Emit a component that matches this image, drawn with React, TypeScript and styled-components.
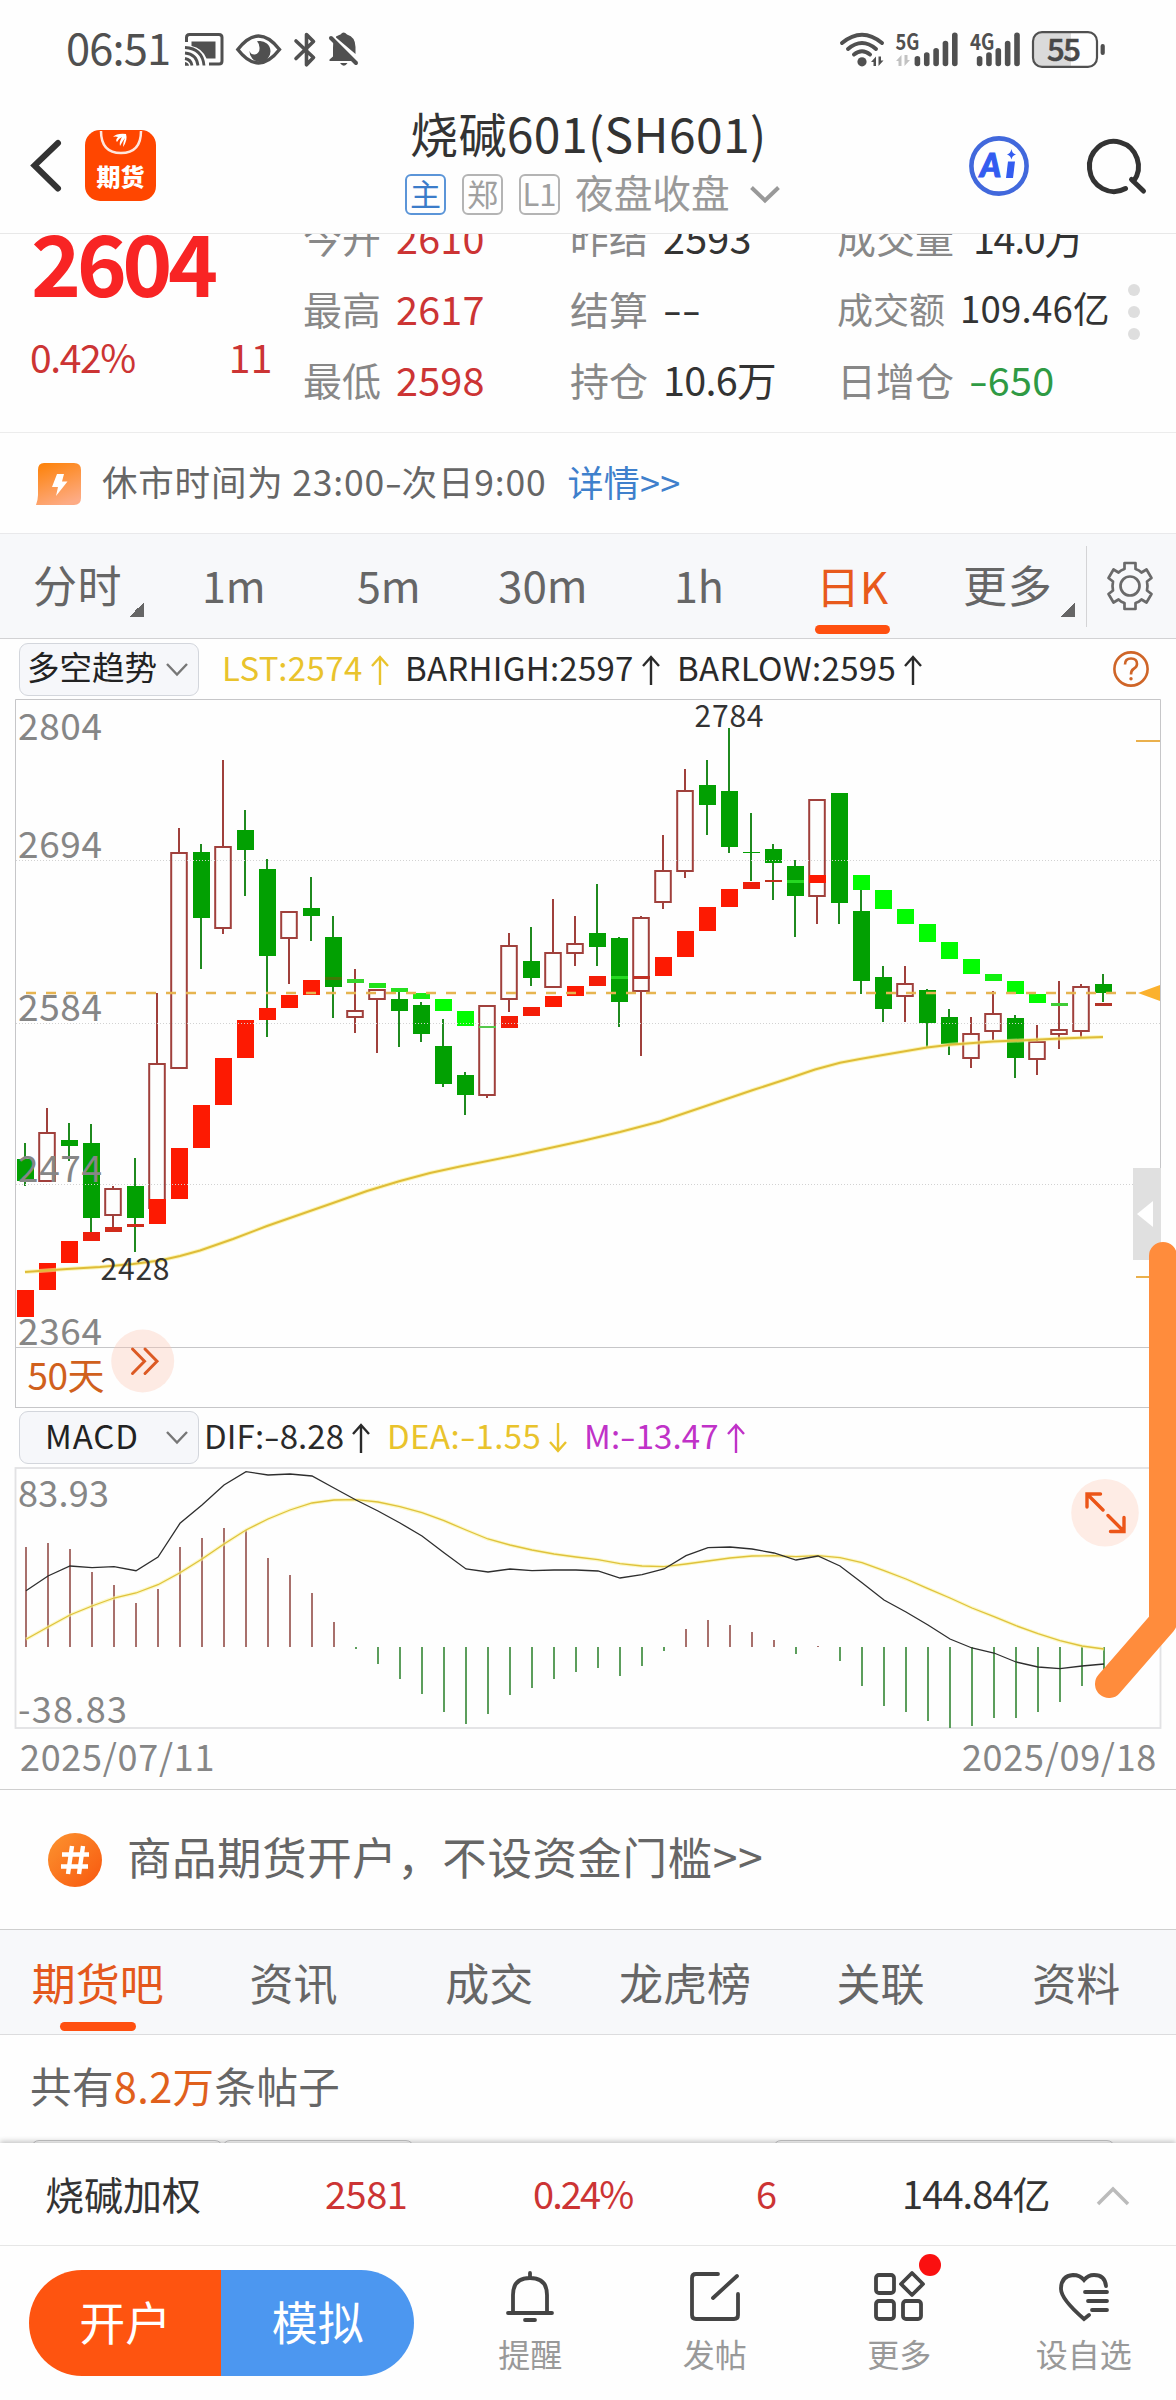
import React from "react";
import styled, { createGlobalStyle, css } from "styled-components";

const Global = createGlobalStyle`
  * { box-sizing: border-box; }
  html, body { margin: 0; padding: 0; background: #fefefe; }
  body { font-family: "Noto Sans CJK SC", "Noto Sans", sans-serif; color: #333; }
  svg { display: block; flex: none; overflow: visible; }
  svg text { font-family: "Noto Sans CJK SC", "Noto Sans", sans-serif; }
`;

const Page = styled.div`
  position: relative;
  width: 1176px;
  height: 2400px;
  overflow: hidden;
  display: flex;
  flex-direction: column;
  background: #fefefe;
`;

const Text = styled.span<{ $size: number; $color?: string; $ls?: number; $bold?: boolean }>`
  font-size: ${(p) => p.$size}px;
  line-height: 1;
  margin-top: -0.14em;
  white-space: nowrap;
  color: ${(p) => p.$color ?? "#333"};
  letter-spacing: ${(p) => p.$ls ?? 0}px;
  font-weight: ${(p) => (p.$bold ? 700 : 400)};
`;

/* Hyphens are drawn wide, close to the width of a digit. */
const WideDash = styled.span`
  display: inline-block;
  width: 0.47em;
  text-align: center;
  letter-spacing: 0;
  transform: scaleX(1.4);
`;
const dashed = (value: string) =>
  value.split(/(-)/).map((part, i) => (part === "-" ? <WideDash key={i}>-</WideDash> : part));

/* ---------- status bar ---------- */

const StatusBar = styled.div`
  flex: none;
  height: 100px;
  display: flex;
  align-items: center;
  padding: 0 71px 0 66px;
`;
const StatusIcons = styled.div`
  display: flex;
  margin-left: 14px;
`;
const StatusRight = styled.div`
  display: flex;
  margin-left: auto;
`;

/* ---------- header ---------- */

const Header = styled.header`
  flex: none;
  height: 134px;
  display: grid;
  grid-template-columns: 403px 1fr 232px;
  border-bottom: 1px solid #e8e8e8;
`;
const HeaderLeft = styled.div`
  display: flex;
  align-items: flex-start;
  padding: 30px 0 0 28px;
  gap: 21px;
`;
const AppIcon = styled.div`
  width: 71px;
  height: 71px;
  border-radius: 15px;
  background: #ff4600;
  display: flex;
  flex-direction: column;
  align-items: center;
`;
const AppName = styled.span`
  color: #fff;
  font-size: 24px;
  line-height: 24px;
  font-weight: 900;
  margin-top: 8px;
`;
const TitleBlock = styled.div`
  display: flex;
  flex-direction: column;
`;
const TitleRow = styled.div`
  height: 71px;
  display: flex;
  align-items: center;
  padding-left: 7px;
`;
const SubRow = styled.div`
  height: 47px;
  display: flex;
  align-items: center;
  padding-left: 2px;
`;
const Tag = styled.span<{ $active?: boolean }>`
  width: 41px;
  height: 41px;
  margin-right: 16px;
  border: 2px solid ${(p) => (p.$active ? "#5b95d8" : "#b4b4b4")};
  border-radius: 6px;
  color: ${(p) => (p.$active ? "#3b7cc9" : "#a0a0a0")};
  font-size: 31px;
  line-height: 34px;
  text-align: center;
`;
const HeaderRight = styled.div`
  display: flex;
  align-items: flex-start;
  padding: 34px 0 0 23px;
  gap: 55px;
`;

/* ---------- quote ---------- */

const Quote = styled.section`
  flex: none;
  height: 199px;
  overflow: hidden;
  display: flex;
  border-bottom: 1px solid #ececec;
`;
const PriceCol = styled.div`
  width: 303px;
  padding-left: 31px;
`;
const PriceLine = styled.div`
  height: 62px;
  display: flex;
  align-items: center;
`;
const ChangeLine = styled.div`
  height: 126px;
  padding: 0 30px 0 0;
  margin-left: -1px;
  display: flex;
  align-items: center;
  justify-content: space-between;
`;
const StatCol = styled.div<{ $w: number }>`
  width: ${(p) => p.$w}px;
  margin-top: -30px;
`;
const Stat = styled.div`
  height: 71.2px;
  display: flex;
  align-items: center;
  gap: 15px;
`;
const Dots = styled.div`
  padding: 50px 0 0 12px;
  display: flex;
  flex-direction: column;
  gap: 10px;
  i {
    width: 12px;
    height: 12px;
    border-radius: 50%;
    background: #dedede;
  }
`;

/* ---------- notice ---------- */

const Notice = styled.section`
  flex: none;
  height: 100px;
  display: flex;
  align-items: center;
  padding: 1px 0 0 36px;
`;

/* ---------- period tabs ---------- */

const PeriodBar = styled.nav`
  flex: none;
  height: 106px;
  position: relative;
  display: flex;
  background: #f7f8fa;
  border-top: 1px solid #e9e9eb;
  border-bottom: 1px solid #d2d2d4;
`;
const Period = styled.div<{ $w: number; $pad: number; $active?: boolean }>`
  width: ${(p) => p.$w}px;
  padding-left: ${(p) => p.$pad}px;
  padding-top: 3px;
  height: 104px;
  display: flex;
  align-items: center;
  ${(p) =>
    p.$active &&
    css`
      padding-top: 0;
      flex-direction: column;
      align-items: flex-start;
      justify-content: flex-end;
    `}
`;
const Underline = styled.i<{ $top: number }>`
  display: block;
  width: 75px;
  height: 9px;
  margin-left: -4px;
  margin-top: ${(p) => p.$top}px;
  margin-bottom: 4px;
  border-radius: 5px;
  background: #ff5010;
`;
const Corner = styled.i`
  width: 15px;
  height: 15px;
  margin: 43px 0 0 7px;
  background: linear-gradient(135deg, transparent 50%, #666 50%);
`;
const Settings = styled.div`
  margin-top: 12px;
  width: 90px;
  height: 81px;
  border-left: 1px solid #d4d4d6;
  display: flex;
  align-items: center;
  padding-left: 20px;
`;

/* ---------- indicator rows ---------- */

const IndicatorRow = styled.div<{ $h: number }>`
  flex: none;
  height: ${(p) => p.$h}px;
  display: flex;
  align-items: center;
  padding-left: 19px;
`;
const Select = styled.div<{ $pad: number; $gap: number }>`
  width: 180px;
  height: 53px;
  flex: none;
  border: 1px solid #d3d6dc;
  border-radius: 9px;
  background: #f6f7fa;
  display: flex;
  align-items: center;
  padding-left: ${(p) => p.$pad}px;
  gap: ${(p) => p.$gap}px;
`;
const Reading = styled.div<{ $w: number; $pad: number }>`
  width: ${(p) => p.$w}px;
  padding-left: ${(p) => p.$pad}px;
  padding-top: 1px;
  display: flex;
  align-items: center;
  gap: 8px;
`;

/* ---------- lower page ---------- */

const DateRow = styled.div`
  flex: none;
  height: 61px;
  display: flex;
  align-items: center;
  justify-content: space-between;
  padding: 0 19px 3px 20px;
  border-bottom: 1px solid #cfcfcf;
`;
const Promo = styled.section`
  flex: none;
  height: 140px;
  display: flex;
  align-items: center;
  padding-left: 48px;
  gap: 25px;
  border-bottom: 1px solid #cfcfcf;
`;
const ForumTabs = styled.nav`
  flex: none;
  height: 105px;
  display: grid;
  grid-template-columns: repeat(6, 195.700px);
  background: #f7f8fa;
  border-bottom: 1px solid #dcdcde;
`;
const ForumTab = styled.div`
  display: flex;
  flex-direction: column;
  align-items: center;
  padding-top: 36px;
`;
const ForumLine = styled.i`
  width: 76px;
  height: 9px;
  margin-top: 18px;
  border-radius: 5px;
  background: #ff5010;
`;
const PostCount = styled.div`
  flex: none;
  height: 105px;
  display: flex;
  align-items: center;
  padding: 2px 0 0 30px;
`;
const FilterRow = styled.div`
  flex: none;
  height: 3px;
  overflow: hidden;
  display: flex;
  padding-left: 31px;
`;
const Filter = styled.div<{ $w: number; $gap: number; $color: string }>`
  flex: none;
  width: ${(p) => p.$w}px;
  height: 60px;
  margin-right: ${(p) => p.$gap}px;
  border: 1px solid ${(p) => p.$color};
  border-radius: 8px;
`;
const BottomSheet = styled.footer`
  flex: none;
  height: 257px;
  position: relative;
  background: #fefefe;
  box-shadow: 0 -2px 5px rgba(0, 0, 0, 0.22);
`;
const Ticker = styled.div`
  height: 103px;
  display: grid;
  grid-template-columns: 280px 208px 223px 146px 194px 80px;
  align-items: center;
  padding: 4px 0 0 45px;
  border-bottom: 1px solid #e6e6e6;
`;
const ActionBar = styled.div`
  height: 154px;
  display: flex;
  padding-left: 29px;
`;
const Pill = styled.div`
  margin: 24px 24px 0 0;
  width: 385px;
  height: 106px;
  border-radius: 53px;
  overflow: hidden;
  display: flex;
`;
const PillHalf = styled.div<{ $bg: string }>`
  flex: 1;
  background: ${(p) => p.$bg};
  display: flex;
  align-items: center;
  justify-content: center;
`;
const NavItem = styled.div`
  position: relative;
  width: 184.6px;
  display: flex;
  flex-direction: column;
  align-items: center;
  padding-top: 24px;
  gap: 17px;
`;
const RedDot = styled.i`
  position: absolute;
  left: 112px;
  top: 8px;
  width: 22px;
  height: 22px;
  border-radius: 50%;
  background: #fa1010;
`;
const Overlay = styled.svg`
  position: absolute;
  left: 0;
  top: 0;
  pointer-events: none;
`;

/* ---------- chart data: [high, top, bottom, low, rising] in pixels ---------- */

const candles: [number, number, number, number, number][] = [
  [1143, 1159, 1181, 1186, 0], [1108, 1132, 1182, 1182, 1], [1123, 1140, 1146, 1161, 0], [1124, 1143, 1218, 1232, 0],
  [1186, 1188, 1216, 1227, 1], [1158, 1186, 1218, 1252, 0], [993, 1063, 1209, 1209, 1], [828, 852, 1069, 1069, 1],
  [844, 852, 918, 969, 0], [760, 846, 929, 934, 1], [810, 830, 850, 896, 0], [859, 869, 956, 1037, 0],
  [911, 911, 939, 984, 1], [877, 908, 916, 941, 0], [916, 937, 987, 1018, 0], [969, 1010, 1018, 1033, 1],
  [989, 989, 1000, 1053, 1], [991, 999, 1011, 1047, 0], [1002, 1005, 1034, 1042, 0], [1019, 1046, 1084, 1087, 0],
  [1072, 1075, 1095, 1115, 0], [1005, 1005, 1096, 1098, 1], [933, 945, 1000, 1012, 1], [927, 961, 978, 986, 0],
  [899, 952, 988, 988, 1], [916, 943, 954, 966, 1], [884, 933, 947, 966, 0], [937, 938, 1002, 1027, 0],
  [916, 917, 992, 1056, 1], [835, 870, 903, 909, 1], [769, 790, 872, 878, 1], [760, 785, 805, 835, 0],
  [728, 791, 847, 853, 0], [813, 852, 853, 881, 0], [844, 849, 863, 900, 0], [860, 866, 896, 937, 0],
  [799, 799, 897, 924, 1], [793, 793, 903, 924, 0], [890, 911, 981, 994, 0], [966, 977, 1009, 1022, 0],
  [966, 983, 997, 1022, 1], [989, 990, 1023, 1047, 0], [1009, 1017, 1044, 1055, 0], [1017, 1033, 1059, 1068, 1],
  [991, 1013, 1032, 1040, 1], [1015, 1018, 1058, 1078, 0], [1025, 1041, 1060, 1075, 1], [981, 1029, 1035, 1049, 1],
  [984, 986, 1032, 1037, 1], [974, 984, 993, 1002, 0],
];

const RED = "#fd1a02";
const LIME = "#02fb02";
const trend: [number, number, number, string][] = [
  [0, 1290, 1317, RED], [1, 1263, 1290, RED], [2, 1241, 1263, RED], [3, 1232, 1241, "#ee200c"], [4, 1227, 1232, "#d02c1c"],
  [5, 1224, 1227, "#d02c1c"], [6, 1199, 1224, RED], [7, 1148, 1199, RED], [8, 1105, 1148, RED], [9, 1058, 1105, RED],
  [10, 1020, 1058, RED], [11, 1008, 1020, RED], [12, 995, 1008, RED], [13, 980, 995, RED], [14, 977, 980, "#3f7a05"],
  [15, 979, 983, "#35d62c"], [16, 983, 988, "#1fe31a"], [17, 988, 992, "#25e020"], [18, 993, 999, "#18ec14"],
  [19, 999, 1011, LIME], [20, 1011, 1026, LIME], [21, 1026, 1028, "#55c84b"], [22, 1016, 1028, "#f41d08"],
  [23, 1007, 1016, "#f41d08"], [24, 996, 1007, RED], [25, 986, 996, RED], [26, 976, 986, "#f41d08"],
  [27, 976, 979, "#25d822"], [28, 976, 979, "#c23024"], [29, 957, 976, RED], [30, 931, 957, RED], [31, 907, 931, RED],
  [32, 889, 907, RED], [33, 882, 889, "#ee200c"], [34, 880, 882, "#c0301c"], [35, 880, 883, "#25d822"],
  [36, 875, 883, RED], [38, 875, 890, LIME], [39, 890, 909, LIME], [40, 909, 924, LIME], [41, 924, 942, LIME],
  [42, 942, 959, LIME], [43, 959, 974, LIME], [44, 974, 981, "#12f010"], [45, 981, 994, LIME], [46, 994, 1003, LIME],
  [47, 1003, 1006, "#40cc36"], [49, 1003, 1006, "#b43428"],
];

const maLine =
  "25,1272 67,1269 100,1267 133,1264 160,1260.5 180,1256 200,1250.5 233,1239 267,1226 300,1214.5 333,1203 367,1191 400,1181 430,1173 460,1166.5 520,1154.5 582,1141 620,1132 660,1121.5 700,1108 753,1090 790,1078 815,1069.5 840,1062.7 860,1059 880,1055.5 927,1047.5 950,1044.7 993,1041.5 1020,1040.5 1060,1038.5 1103,1037";

const macdBars = [
  1547, 1543, 1549, 1572, 1585, 1603, 1589, 1547, 1538, 1528, 1530, 1558, 1575, 1593, 1622, 1649, 1664, 1679, 1694, 1712,
  1724, 1714, 1695, 1688, 1679, 1672, 1668, 1676, 1666, 1651, 1629, 1620, 1625, 1632, 1640, 1654, 1646, 1661, 1686, 1706,
  1712, 1721, 1728, 1726, 1718, 1718, 1712, 1702, 1686, 1676,
];
const dif = [
  1590.7, 1576, 1566, 1567.7, 1566.7, 1570.7, 1557, 1523.3, 1505, 1485, 1471.7, 1475, 1474, 1476, 1488, 1500, 1511, 1523,
  1536, 1552.7, 1569, 1572, 1569, 1570.7, 1570, 1570, 1571, 1578, 1574.7, 1569, 1555.7, 1547.7, 1547, 1549, 1553, 1560,
  1556, 1566, 1582.7, 1600, 1612, 1625, 1639, 1648, 1653, 1662, 1667, 1668.7, 1666, 1664,
];
const dea = [
  1639.3, 1627, 1615, 1606, 1598, 1593, 1584.7, 1572.7, 1559, 1544, 1530, 1519, 1510, 1503, 1500, 1499.7, 1502, 1506.7,
  1512.7, 1520.7, 1530, 1539, 1545, 1550, 1554, 1557, 1559.7, 1563.7, 1566, 1566.7, 1564, 1561, 1558, 1556, 1555.7, 1556.7,
  1555.7, 1557.7, 1562.7, 1570.7, 1579, 1588.7, 1598, 1608, 1616.7, 1625.7, 1633.7, 1640.7, 1646, 1649,
];
const toPoints = (ys: number[]) => ys.map((y, i) => `${26 + 22 * i},${y}`).join(" ");

/* ---------- small drawings ---------- */

const Arrow = ({ color, down }: { color: string; down?: boolean }) => (
  <svg width="18" height="30" viewBox="0 0 18 30" fill="none" stroke={color} strokeWidth="2.4">
    <path d={down ? "M9 0V28M1 19L9 28L17 19" : "M9 30V2M1 11L9 2L17 11"} />
  </svg>
);
const SmallChevron = () => (
  <svg width="22" height="13" viewBox="0 0 22 13" fill="none" stroke="#777" strokeWidth="2.4">
    <path d="M1 1L11 11.5L21 1" />
  </svg>
);

const StatusGlyphs = () => (
  <svg width="176" height="40" viewBox="184 30 176 40" fill="none" stroke="#505050">
    <g strokeWidth="3">
      <path d="M186.5 42V37.5Q186.5 34.5 189.5 34.5H219Q222 34.5 222 37.5V61Q222 64 219 64H209" />
      <path d="M191.5 41.5H215.5V58.5H206.5Q202 48 191.5 46Z" fill="#505050" stroke="none" />
      <path d="M185 47.5Q202.5 48.5 204 65.5M185 53Q196.5 54 198 65.5M185 58.5Q191 59.5 192 65.5" strokeWidth="2.8" />
      <path d="M185 62Q188.5 62.5 189 65.8H185Z" fill="#505050" stroke="none" />
    </g>
    <path d="M237.8 49.5Q258.5 22.5 279.5 49.5Q258.5 76.5 237.8 49.5Z" strokeWidth="3.4" />
    <path d="M259 41A10.5 10.5 0 1 1 249.5 51Q251 55 255 54.5Q260 53 259.5 47.5Q259.5 44 257 41.3Z" fill="#505050" stroke="none" />
    <path d="M296 41L313.5 57.5L306.5 64.8V34.5L313.5 41.5L296 58.5" strokeWidth="3.6" strokeLinejoin="round" strokeLinecap="round" />
    <path d="M336 36.5Q339 35 340.5 34.5Q343.5 30.5 347 34.5Q355.5 37 355.5 47V54L336 37.5ZM333.5 41.5L353.5 61H329.5V59.5L333 56.5V48Q333 44 333.5 41.5ZM340 63H347.5Q344 68.5 340 63Z" fill="#505050" stroke="none" />
    <path d="M331 38L356 63" strokeWidth="4" strokeLinecap="round" />
  </svg>
);

const SignalGlyphs = () => {
  const tops = [56, 52.3, 48, 40.7, 32.5];
  return (
    <svg width="266" height="40" viewBox="839 30 266 40">
      <g fill="none" stroke="#505050" strokeWidth="4" strokeLinecap="round">
        <path d="M842 43Q862 26.5 882 43M848 49Q862 37 876 49M854 54.5Q862 48 870 54.5" />
      </g>
      <circle cx="862" cy="61.8" r="4.6" fill="#505050" />
      <path d="M871 62L876 56.5V66H873.5V62ZM883.5 60.5L878.5 66V56.5H881V60.5Z" fill="#505050" />
      <text x="895.5" y="49.5" fontSize="22" fontWeight="700" fill="#505050" textLength="24" lengthAdjust="spacingAndGlyphs">5G</text>
      <path d="M896 61L901.5 55V66H898.5V61ZM910 60L904.5 66V55H907.5V60Z" fill="#c2c2c2" />
      {tops.map((y, i) => (
        <rect key={i} x={914.6 + i * 9.35} y={y} width="5.6" height={66.3 - y} rx="2.8" fill="#505050" />
      ))}
      <text x="970" y="49.5" fontSize="22" fontWeight="700" fill="#505050" textLength="24.5" lengthAdjust="spacingAndGlyphs">4G</text>
      {tops.map((y, i) => (
        <rect key={i} x={976.8 + i * 9.35} y={y} width="5.6" height={66.3 - y} rx="2.8" fill="#505050" />
      ))}
      <path d="M1071 33H1042Q1033 33 1033 42V57Q1033 66 1042 66H1071Z" fill="#dadada" />
      <rect x="1033" y="32.2" width="64" height="34.6" rx="9" fill="none" stroke="#505050" strokeWidth="2.2" />
      <rect x="1100.6" y="44" width="4.2" height="11" rx="2" fill="#505050" />
      <text x="1047" y="61" fontSize="31" fontWeight="500" fill="#484848" stroke="#484848" strokeWidth="0.6" textLength="34">55</text>
    </svg>
  );
};

const Gear = () => (
  <svg width="46" height="50" viewBox="-23 -24 46 50" fill="none" stroke="#6a6a6a" strokeWidth="2.7" strokeLinejoin="round">
    <path d="M-5.5 -23H5.5V-17Q9 -16 11.5 -13.5L16.5 -16.5L21.5 -8L17 -4.5Q18 0 17 4.5L21.5 8L16.5 16.5L11.5 13.5Q9 16 5.5 17V23H-5.5V17Q-9 16 -11.5 13.5L-16.5 16.5L-21.5 8L-17 4.5Q-18 0 -17 -4.5L-21.5 -8L-16.5 -16.5L-11.5 -13.5Q-9 -16 -5.5 -17Z" />
    <circle r="9.5" />
  </svg>
);

const PriceChart = () => (
  <svg width="1176" height="709" viewBox="0 699 1176 709">
    <path d="M15.5 1408V699.5H1160.5V1408M15.5 1347.5H1160.5M15.5 1407.5H1160.5" fill="none" stroke="#c6c6c8" />
    {candles.map(([hi, top, bot, lo, up], i) => {
      const c = 25 + 22 * i;
      return up ? (
        <g key={i} stroke="#a0403c" strokeWidth="2" fill="none">
          <rect x={c - 7.8} y={top + 1} width="15.6" height={Math.max(bot - top - 2, 2)} />
          <path d={`M${c} ${hi}V${top}M${c} ${bot}V${lo}`} />
        </g>
      ) : (
        <g key={i}>
          <rect x={c - 1} y={hi} width="2" height={lo - hi} fill="#1f8a1f" />
          <rect x={c - 8} y={top} width="17" height={bot - top} fill="#02a002" />
        </g>
      );
    })}
    {trend.map(([i, t, b, fill]) => (
      <rect key={i} x={17 + 22 * i} y={t} width="17" height={b - t} fill={fill} />
    ))}
    <path d="M16 860.5H1160M16 1023.5H1160M16 1184.5H1160" stroke="#d2d2d2" strokeDasharray="1 2" />
    <polyline points={maLine} fill="none" stroke="#f8f08a" strokeWidth="4" opacity="0.6" />
    <polyline points={maLine} fill="none" stroke="#dfbc38" strokeWidth="2" />
    <path d="M26 993H1136.5" stroke="#e6b450" strokeWidth="2.4" strokeDasharray="10 10" />
    <path d="M1138 993L1160 985V1001Z" fill="#fbb12e" />
    <path d="M1136 741H1160M1136 1277H1160" stroke="#eab04c" strokeWidth="2" />
    <g fill="#868686" fontSize="37">
      <text x="18" y="740" textLength="84">2804</text>
      <text x="18" y="858" textLength="84">2694</text>
      <text x="18" y="1021" textLength="84">2584</text>
      <text x="18" y="1182" textLength="84">2474</text>
      <text x="18" y="1345" textLength="84">2364</text>
    </g>
    <text x="694.5" y="726.5" fontSize="30" fill="#333" textLength="69">2784</text>
    <text x="100.5" y="1280" fontSize="30" fill="#333" textLength="69">2428</text>
    <text x="27.5" y="1390" fontSize="37" fill="#d0601c" textLength="77">50天</text>
    <circle cx="142.7" cy="1361" r="31.5" fill="rgba(252,196,176,0.34)" />
    <path d="M132.5 1349L144.5 1361.3L132.5 1373.5M145 1349L157 1361.3L145 1373.5" fill="none" stroke="#dc5a24" strokeWidth="3" strokeLinecap="round" />
    <rect x="1133" y="1168" width="28" height="92" fill="#e0e0e0" />
    <path d="M1137 1214L1153 1201V1227Z" fill="#fff" />
  </svg>
);

const MacdChart = () => (
  <svg width="1176" height="262" viewBox="0 1467 1176 262">
    <rect x="15.5" y="1468" width="1145" height="260" fill="none" stroke="#e2e2e4" strokeWidth="1.8" />
    {macdBars.map((y, i) => (
      <rect
        key={i}
        x={25 + 22 * i}
        y={Math.min(y, 1647)}
        width="2"
        height={Math.abs(y - 1647)}
        fill={y < 1647 ? "#a8706c" : "#5c9e5c"}
      />
    ))}
    <polyline points={toPoints(dea)} fill="none" stroke="#faf3a0" strokeWidth="3.5" opacity="0.6" />
    <polyline points={toPoints(dea)} fill="none" stroke="#dfc23c" strokeWidth="1.3" />
    <polyline points={toPoints(dif)} fill="none" stroke="#2e2e2e" strokeWidth="1.3" />
    <g fill="#868686" fontSize="36">
      <text x="18" y="1507" textLength="91">83.93</text>
      <text x="18" y="1723" textLength="109">-38.83</text>
    </g>
    <circle cx="1105" cy="1512.7" r="33.8" fill="#feece5" />
    <path d="M1103 1510L1087.5 1494.5M1100.5 1494H1087V1507M1108 1515.5L1123.5 1531M1110.5 1531.5H1124V1517.5" fill="none" stroke="#ec5518" strokeWidth="3.4" strokeLinecap="round" />
  </svg>
);

type StatData = { label: string; value: string; color?: string; size?: number; ls?: number; lead?: number };
const stats: { w: number; rows: StatData[] }[] = [
  {
    w: 267,
    rows: [
      { label: "今开", value: "2610", color: "#cc3434", ls: 0.2 },
      { label: "最高", value: "2617", color: "#cc3434", ls: 0.2 },
      { label: "最低", value: "2598", color: "#cc3434", ls: 0.2 },
    ],
  },
  {
    w: 267,
    rows: [
      { label: "昨结", value: "2593", ls: 0.2 },
      { label: "结算", value: "--" },
      { label: "持仓", value: "10.6万", ls: -0.7 },
    ],
  },
  {
    w: 279,
    rows: [
      { label: "成交量", value: "14.0万", ls: -1.4, lead: 4 },
      { label: "成交额", value: "109.46亿", size: 36, ls: 0.2 },
      { label: "日增仓", value: "-650", color: "#2f9a44", ls: 0.3 },
    ],
  },
];

export default function App() {
  return (
    <Page>
      <Global />
      <StatusBar>
        <Text $size={43.5} $color="#505050" $ls={-0.9}>06:51</Text>
        <StatusIcons><StatusGlyphs /></StatusIcons>
        <StatusRight><SignalGlyphs /></StatusRight>
      </StatusBar>

      <Header>
        <HeaderLeft>
          <svg width="36" height="71" viewBox="28 130 36 71" fill="none" stroke="#333" strokeWidth="6" strokeLinecap="round">
            <path d="M58 143L34.5 165.5L58 188.5" />
          </svg>
          <AppIcon>
            <svg width="44" height="26" viewBox="0 0 44 26" fill="none">
              <path d="M2 1Q2 23 22 23Q42 23 42 1" stroke="#ffe6dc" strokeWidth="2.5" />
              <path d="M14 7Q18 3 27 4Q29 10 24 17Q24 12 26 8Q23 12 21 16Q20 12 23 7Q19 9 18 12Q16 10 19 7Q16 6 14 7Z" fill="#fff" />
            </svg>
            <AppName>期货</AppName>
          </AppIcon>
        </HeaderLeft>
        <TitleBlock>
          <TitleRow><Text $size={48} $ls={0.4}>烧碱601(SH601)</Text></TitleRow>
          <SubRow>
            <Tag $active>主</Tag>
            <Tag>郑</Tag>
            <Tag>L1</Tag>
            <Text $size={38.7} $color="#999" style={{ marginLeft: -1 }}>夜盘收盘</Text>
            <svg width="30" height="18" viewBox="0 0 30 18" fill="none" stroke="#999" strokeWidth="4" style={{ marginLeft: 20 }}>
              <path d="M1.5 1.5L15 14.5L28.5 1.5" />
            </svg>
          </SubRow>
        </TitleBlock>
        <HeaderRight>
          <svg width="64" height="64" viewBox="967 135 64 64">
            <circle cx="999" cy="167" r="27.6" fill="none" stroke="#4168dc" strokeWidth="4.6" />
            <text x="980" y="177.5" fontSize="32" fontWeight="900" fill="#335cf0" stroke="#335cf0" strokeWidth="1.2" style={{ fontFamily: "Lato", fontStyle: "italic" }}>A</text>
            <path d="M1008 162.5H1015L1013 179H1006Z" fill="#335cf0" />
            <path d="M1011.5 150Q1012 154.5 1016 155.5Q1012 156.5 1011.5 160.5Q1010.5 156.5 1007 155.500Q1010.5 154.5 1011.5 150Z" fill="#335cf0" />
          </svg>
          <svg width="62" height="62" viewBox="1085 135 62 62" fill="none" stroke="#333" strokeWidth="5">
            <path d="M1124.5 189.5A24.5 25 0 1 1 1132.5 182.5M1130.5 180.5L1142.5 192" strokeLinecap="round" />
          </svg>
        </HeaderRight>
      </Header>

      <Quote>
        <PriceCol>
          <PriceLine><Text $size={85} $color="#f82424" $ls={-4.5} $bold>2604</Text></PriceLine>
          <ChangeLine>
            <Text $size={39} $color="#cc3434" $ls={-1.4}>0.42%</Text>
            <Text $size={39} $color="#cc3434" $ls={0.5}>11</Text>
          </ChangeLine>
        </PriceCol>
        {stats.map((col, n) => (
          <StatCol $w={col.w} key={n}>
            {col.rows.map((row) => (
              <Stat key={row.label}>
                <Text $size={row.size ?? 39} $color="#888">{row.label}</Text>
                <Text $size={(row.size ?? 39) + 0.6} $color={row.color} $ls={row.ls} style={{ marginLeft: row.lead ?? 0 }}>
                  {dashed(row.value)}
                </Text>
              </Stat>
            ))}
          </StatCol>
        ))}
        <Dots><i /><i /><i /></Dots>
      </Quote>

      <Notice>
        <svg width="46" height="42" viewBox="0 0 46 42">
          <defs>
            <linearGradient id="flash" x1="0.2" y1="0" x2="0.6" y2="1">
              <stop offset="0" stopColor="#fd830c" />
              <stop offset="1" stopColor="#fdab84" />
            </linearGradient>
          </defs>
          <path d="M8 0H38Q45 0 45 7V35Q45 42 38 42H0Q2 36 2 32V7Q2 0 8 0Z" fill="url(#flash)" />
          <path d="M21 11H28L26 18.5H31.5L20 33L22 24H16Z" fill="#fff" />
        </svg>
        <Text $size={35.5} $color="#666" $ls={0.8} style={{ marginLeft: 20 }}>{dashed("休市时间为 23:00-次日9:00")}</Text>
        <Text $size={36} $color="#3f80cc" $ls={0.3} style={{ marginLeft: 21 }}>详情&gt;&gt;</Text>
      </Notice>

      <PeriodBar>
        <Period $w={170} $pad={33}><Text $size={44} $color="#666" $ls={0.6}>分时</Text><Corner /></Period>
        <Period $w={170} $pad={32}><Text $size={43} $color="#666">1m</Text></Period>
        <Period $w={170} $pad={17}><Text $size={43} $color="#666">5m</Text></Period>
        <Period $w={150} $pad={0}><Text $size={44} $color="#666" style={{ marginLeft: -12 }}>30m</Text></Period>
        <Period $w={159} $pad={14}><Text $size={43} $color="#666">1h</Text></Period>
        <Period $w={141} $pad={0} $active>
          <Text $size={44} $color="#e85a1c" $ls={-0.2} style={{ marginLeft: -3 }}>日K</Text>
          <Underline $top={18} />
        </Period>
        <Period $w={126} $pad={3}><Text $size={44} $color="#666" $ls={0.8}>更多</Text><Corner /></Period>
        <Settings><Gear /></Settings>
      </PeriodBar>

      <IndicatorRow $h={60}>
        <Select $pad={7} $gap={9}><Text $size={32.5} $color="#222">多空趋势</Text><SmallChevron /></Select>
        <Reading $w={206} $pad={23}><Text $size={33} $color="#e9c32c" $ls={0.4}>LST:2574</Text><Arrow color="#e9c32c" /></Reading>
        <Reading $w={272} $pad={0}><Text $size={33} $color="#2a2a2a" $ls={0.25}>BARHIGH:2597</Text><Arrow color="#2a2a2a" /></Reading>
        <Reading $w={435} $pad={0}><Text $size={33} $color="#2a2a2a" $ls={0.35}>BARLOW:2595</Text><Arrow color="#2a2a2a" /></Reading>
        <svg width="38" height="38" viewBox="-19 -19 38 38" fill="none" stroke="#cf6528" strokeWidth="2.6">
          <circle r="16.6" />
          <path d="M-6 -4.5Q-6 -10.5 0 -10.5Q6 -10.5 6 -5Q6 -2 2.5 0Q0 1.5 0 5.5" />
          <circle cy="9.8" r="1.7" fill="#cf6528" stroke="none" />
        </svg>
      </IndicatorRow>

      <PriceChart />

      <IndicatorRow $h={59}>
        <Select $pad={25} $gap={27}><Text $size={33} $color="#222" $ls={0.9}>MACD</Text><SmallChevron /></Select>
        <Reading $w={188} $pad={5}><Text $size={33} $color="#2a2a2a" $ls={0.1}>{dashed("DIF:-8.28")}</Text><Arrow color="#2a2a2a" /></Reading>
        <Reading $w={197} $pad={0}><Text $size={33} $color="#e9c32c" $ls={0.4}>{dashed("DEA:-1.55")}</Text><Arrow color="#e9c32c" down /></Reading>
        <Reading $w={300} $pad={0}><Text $size={33} $color="#c032c8" $ls={0.1}>{dashed("M:-13.47")}</Text><Arrow color="#c032c8" /></Reading>
      </IndicatorRow>

      <MacdChart />

      <DateRow>
        <Text $size={36} $color="#868686" $ls={0.7}>2025/07/11</Text>
        <Text $size={36} $color="#868686" $ls={0.7}>2025/09/18</Text>
      </DateRow>

      <Promo>
        <svg width="54" height="54" viewBox="-27 -27 54 54">
          <defs>
            <linearGradient id="hash" x1="0" y1="0" x2="1" y2="1">
              <stop offset="0" stopColor="#fc9430" />
              <stop offset="1" stopColor="#f8570e" />
            </linearGradient>
          </defs>
          <circle r="27" fill="url(#hash)" />
          <path d="M-3 -14L-7 14M8 -14L4 14M-13 -5.5H14M-14 6.5H13" fill="none" stroke="#fff" strokeWidth="4.4" />
        </svg>
        <Text $size={44.5} $color="#666" $ls={0.55}>商品期货开户，不设资金门槛&gt;&gt;</Text>
      </Promo>

      <ForumTabs>
        {["期货吧", "资讯", "成交", "龙虎榜", "关联", "资料"].map((name, i) => (
          <ForumTab key={name}>
            <Text $size={44} $color={i === 0 ? "#e4581c" : "#666"}>{name}</Text>
            {i === 0 && <ForumLine />}
          </ForumTab>
        ))}
      </ForumTabs>

      <PostCount>
        <Text $size={41.5} $color="#666" $ls={0.4}>
          共有<Text $size={41.5} $color="#e0601c" $ls={0.4}>8.2万</Text>条帖子
        </Text>
      </PostCount>
      <FilterRow>
        <Filter $w={192} $gap={-1} $color="#c9c9cb" />
        <Filter $w={192} $gap={359} $color="#c9c9cb" />
        <Filter $w={342} $gap={0} $color="#c9c9cb" />
      </FilterRow>

      <BottomSheet>
        <Ticker>
          <Text $size={39}>烧碱加权</Text>
          <Text $size={38} $color="#cc3434" $ls={-0.5}>2581</Text>
          <Text $size={38} $color="#cc3434" $ls={-1.9}>0.24%</Text>
          <Text $size={38} $color="#cc3434">6</Text>
          <Text $size={38} $ls={-0.9}>144.84亿</Text>
          <svg width="34" height="20" viewBox="0 0 34 20" fill="none" stroke="#bbb" strokeWidth="3.5">
            <path d="M2 18L17 3L32 18" />
          </svg>
        </Ticker>
        <ActionBar>
          <Pill>
            <PillHalf $bg="#fe5410"><Text $size={46} $color="#fff">开户</Text></PillHalf>
            <PillHalf $bg="#4c97f0"><Text $size={46} $color="#fff">模拟</Text></PillHalf>
          </Pill>
          <NavItem>
            <svg width="54" height="54" viewBox="0 0 54 54" fill="none" stroke="#444" strokeWidth="3.8" strokeLinecap="round">
              <path d="M27 3V7M5 43H49M10 43V25Q10 8 27 8Q44 8 44 25V43M22 50H32" />
            </svg>
            <Text $size={32} $color="#999">提醒</Text>
          </NavItem>
          <NavItem>
            <svg width="54" height="54" viewBox="0 0 54 54" fill="none" stroke="#444" strokeWidth="3.8" strokeLinecap="round">
              <path d="M30 4H8Q4 4 4 8V45Q4 49 8 49H46Q50 49 50 45V24M25 28L49 6" />
            </svg>
            <Text $size={32} $color="#999">发帖</Text>
          </NavItem>
          <NavItem>
            <RedDot />
            <svg width="54" height="54" viewBox="0 0 54 54" fill="none" stroke="#444" strokeWidth="3.8" strokeLinejoin="round">
              <rect x="4" y="5" width="18" height="18" rx="3" />
              <rect x="4" y="31" width="18" height="18" rx="3" />
              <rect x="31" y="31" width="18" height="18" rx="3" />
              <path d="M40 3L51 14L40 25L29 14Z" />
            </svg>
            <Text $size={32} $color="#999">更多</Text>
          </NavItem>
          <NavItem>
            <svg width="54" height="54" viewBox="0 0 54 54" fill="none" stroke="#444" strokeWidth="3.8" strokeLinecap="round">
              <path d="M49 16Q48 5 37 5Q31 5 27 10Q23 5 16 5Q4 6 4 19Q4 29 27 49L32 45M28 22H50M31 31H50M35 40H50" />
            </svg>
            <Text $size={32} $color="#999">设自选</Text>
          </NavItem>
        </ActionBar>
      </BottomSheet>

      <Overlay width="1176" height="2400" viewBox="0 0 1176 2400">
        <path d="M1163 1256V1622L1109 1684" fill="none" stroke="#ff8c3c" strokeWidth="28" strokeLinecap="round" strokeLinejoin="round" />
      </Overlay>
    </Page>
  );
}
